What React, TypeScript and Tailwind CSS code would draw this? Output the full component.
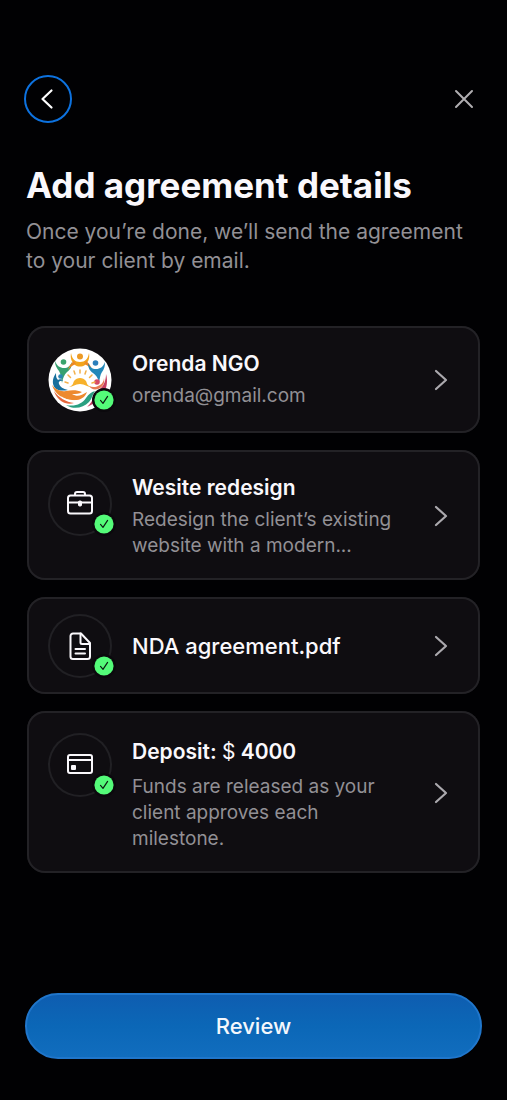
import React from 'react';

const CheckBadge = () => (
  <span className="absolute -right-1 bottom-0 flex h-6 w-6 items-center justify-center rounded-full bg-[#0b090d]">
    <svg width="20" height="20" viewBox="0 0 20 20" fill="none" aria-hidden="true">
      <circle cx="10" cy="10" r="9.6" fill="#54fb79" />
      <path d="M6.500 10.400l2.500 2.900 4.600-6.900" stroke="#0c1c12" strokeWidth="1.200" strokeLinecap="round" strokeLinejoin="round" />
    </svg>
  </span>
);

const OrendaLogo = () => (
  <svg width="64" height="64" viewBox="0 0 64 64" fill="none" aria-hidden="true">
    <circle cx="32" cy="32" r="31.5" fill="#fff" />
    {/* figures with raised arms */}
    <path d="M7 13c2 5 5 7 9 7s6-2 8-6c0 5-2 8-5 10-3 3-4 6-5 11-1-5-1-9-3-12-2-3-4-5-4-10z" fill="#36a070" />
    <circle cx="15.500" cy="14" r="2.800" fill="#39a36b" />
    <path d="M23 5c1 6 4 9 9 9s8-3 9-9c1 6-1 9-4 12-3 2-7 2-10 0-3-3-5-6-4-12z" fill="#f2a51d" />
    <path d="M28 16c-3 1-6 3-8 6 1-4 3-7 6-9zM36 16c3 1 6 3 8 6-1-4-3-7-6-9z" fill="#ec8a25" />
    <circle cx="32" cy="8.500" r="3" fill="#ec9a25" />
    <path d="M57 14c-2 5-5 7-9 7s-6-2-8-6c0 5 2 8 5 10 3 2 5 5 6 9 1-4 1-7 3-10 2-3 3-5 3-10z" fill="#2388b9" />
    <circle cx="47.500" cy="15" r="2.800" fill="#2b7fbb" />
    {/* side waves */}
    <path d="M8 25c-4 6-4 11-1 15 3 3 8 3 13 2-5-1-8-3-9-6-1-2 1-4 4-3-1-2-4-2-5-1-2-2-2-4-2-7z" fill="#176f9d" />
    <circle cx="12.500" cy="28.500" r="2.300" fill="#2a86b4" />
    <path d="M58 26c2 7 1 14-3 20-4 6-9 10-16 13 4-4 6-7 7-11 1-3 4-6 7-8 3-3 5-8 5-14z" fill="#c63f61" />
    <circle cx="49" cy="34" r="2.800" fill="#d64a66" />
    <path d="M41 38c4 2 8 1 11-1 2-1 4-4 4-7 1 5-1 9-6 11-4 1-7 0-9-3z" fill="#e77a55" />
    {/* sun */}
    <path d="M23 38c2-1 2-3 3-5 3-4 9-4 12 0 1 2 1 4 3 5l2 1c-4 0-6-3-11-3s-7 3-11 3z" fill="#f7b12b" />
    <path d="M32 22v3M26 23l1 3M38 23l-1 3M20 27l2.500 2.500M44 27l-2.500 2.500M17 34l3 1M47 34l-3 1" stroke="#f3b04a" strokeWidth="1.500" strokeLinecap="round" />
    {/* open hands */}
    <path d="M4 37c4 5 9 7 14 6 6-1 11-1 16 1-3 2-6 2-10 2 5 3 9 2 15-2-2 6-8 9-15 8C14 51 7 46 4 37z" fill="#ed8a2f" />
    <path d="M13 48c5 4 10 5 16 4-1 1-3 2-5 2-5 0-8-2-11-6z" fill="#fff" />
    <path d="M6 43c5 7 12 11 20 12-3 1-6 1-9 0C12 53 8 49 6 43z" fill="#e4663b" />
    <path d="M18 57c9 2 16-1 20-7 3-4 5-6 9-7-3 4-3 8-6 11-6 6-15 8-23 3z" fill="#2a9f80" />
  </svg>
);

const BriefcaseIcon = () => (
  <svg width="30" height="30" viewBox="0 0 30 30" fill="none" stroke="#faf8fc" strokeWidth="2" strokeLinejoin="round" aria-hidden="true">
    <rect x="3" y="6.500" width="24" height="18" rx="2.500" />
    <path d="M10 6.500V5a2 2 0 0 1 2-2h6a2 2 0 0 1 2 2v1.500M3 13.500h24" />
    <rect x="13.500" y="12" width="3" height="5" rx="1" fill="#faf8fc" strokeWidth="1" />
  </svg>
);

const FileIcon = () => (
  <svg width="30" height="30" viewBox="0 0 30 30" fill="none" stroke="#faf8fc" strokeWidth="2" strokeLinecap="round" strokeLinejoin="round" aria-hidden="true">
    <path d="M16 2.500H8A2.500 2.500 0 0 0 5.500 5v20.500A2.500 2.500 0 0 0 8 28h14.500a2.500 2.500 0 0 0 2.500-2.500V12z" />
    <path d="M15.500 2.500v9a1.500 1.500 0 0 0 1.500 1.500h8M10.500 18h9.500M10.500 22.500h9.500" />
  </svg>
);

const CardIcon = () => (
  <svg width="30" height="30" viewBox="0 0 30 30" fill="none" stroke="#faf8fc" strokeWidth="2" strokeLinejoin="round" aria-hidden="true">
    <rect x="3" y="5" width="24" height="18" rx="2" />
    <path d="M3 10h24" />
    <rect x="6" y="15" width="5" height="5" rx="1" fill="#faf8fc" stroke="none" />
  </svg>
);

const ChevronRight = () => (
  <svg width="16" height="24" viewBox="0 0 16 24" fill="none" aria-hidden="true" className="shrink-0">
    <path d="M3 3l10 9-10 9" stroke="#aba9ae" strokeWidth="2.200" strokeLinecap="round" strokeLinejoin="round" />
  </svg>
);

interface DetailCardProps {
  icon: React.ReactNode;
  title: React.ReactNode;
  description?: string;
  outlined?: boolean;
  className?: string;
  titleClassName?: string;
}

const DetailCard = ({
  icon,
  title,
  description,
  outlined = true,
  className = 'pt-[22px] pb-[21px]',
  titleClassName = 'text-[21px] leading-8 font-semibold',
}: DetailCardProps) => (
  <button type="button" className={`flex w-full items-center rounded-[18px] bg-[#0f0d11] pr-[31px] pl-[21px] text-left inset-ring-2 inset-ring-[#232226] ${className}`}>
    <span className={`relative flex h-16 w-16 shrink-0 items-center justify-center self-start rounded-full ${outlined ? 'inset-ring-2 inset-ring-[#212024]' : ''}`}>
      {icon}
      <CheckBadge />
    </span>
    <span className={`ml-5 flex-1 pr-9 ${description ? 'self-start' : ''}`}>
      <span className={`block text-[#faf8fc] ${titleClassName}`}>{title}</span>
      {description && <span className="mt-[3px] block text-[19px] leading-[26px] text-[#929095]">{description}</span>}
    </span>
    <ChevronRight />
  </button>
);

export default function App() {
  return (
    <div className="flex min-h-screen flex-col bg-[#010103] px-[25px] pt-[75px] pb-[41px] font-['Inter',sans-serif]">
      <header className="-ml-px flex items-center justify-between">
        <button type="button" aria-label="Back" className="flex h-12 w-12 items-center justify-center rounded-full border-2 border-[#0d72df]">
          <svg width="16" height="24" viewBox="0 0 16 24" fill="none" aria-hidden="true">
            <path d="M11.500 3.500L2.500 12l9 8.500" stroke="#fff" strokeWidth="2.200" strokeLinecap="round" strokeLinejoin="round" />
          </svg>
        </button>
        <button type="button" aria-label="Close" className="mr-0.5 flex h-6 w-8 items-center justify-center">
          <svg width="24" height="24" viewBox="0 0 24 24" fill="none" aria-hidden="true">
            <path d="M4 4l16 16M20 4L4 20" stroke="#b0aeb1" strokeWidth="2" strokeLinecap="round" />
          </svg>
        </button>
      </header>

      <h1 className="mt-10 px-px text-[35px] leading-[44px] font-bold text-[#faf8fc]">Add agreement details</h1>
      <p className="mt-2.5 px-px text-[21px] leading-[29px] text-[#929095]">Once you’re done, we’ll send the agreement to your client by email.</p>

      <main className="mx-0.5 mt-[51px] mb-10 flex flex-col gap-[17px]">
        <DetailCard icon={<OrendaLogo />} outlined={false} title="Orenda NGO" description="orenda@gmail.com" />
        <DetailCard icon={<BriefcaseIcon />} title="Wesite redesign" description="Redesign the client’s existing website with a modern..." />
        <DetailCard icon={<FileIcon />} title="NDA agreement.pdf" className="pt-[17px] pb-4" titleClassName="text-[22px] leading-8 font-medium" />
        <DetailCard
          icon={<CardIcon />}
          title={<>Deposit: <span className="font-normal">$</span> 4000</>}
          titleClassName="text-[21px] leading-[38px] font-semibold"
          description="Funds are released as your client approves each milestone."
        />
      </main>

      <button type="button" className="mt-auto h-[66px] w-full shrink-0 rounded-full border-2 border-[#2076cb] bg-linear-to-b from-[#0e5db0] via-[#0b67b7] to-[#116dbe] text-[22px] font-medium text-[#f4f7fc]">
        Review
      </button>
    </div>
  );
}
